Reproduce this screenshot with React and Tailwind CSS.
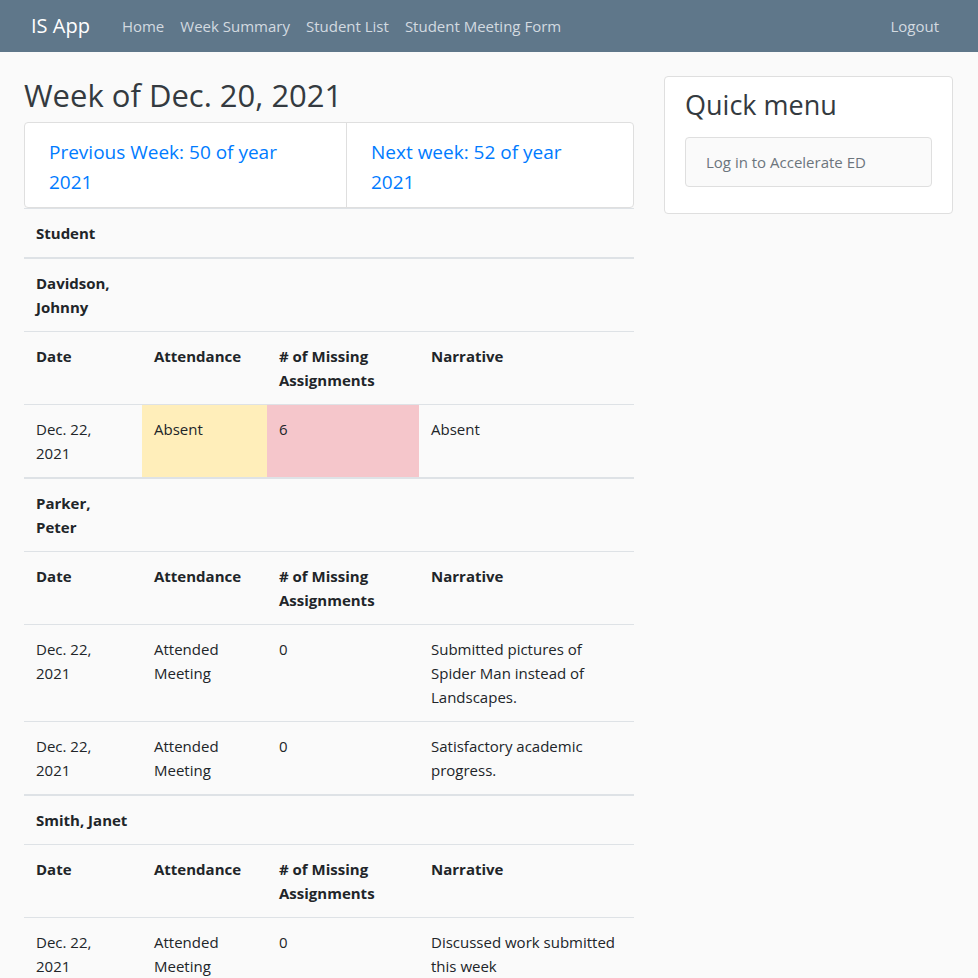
import React from "react";

const FONT = { fontFamily: '"Open Sans", "Noto Sans", Arial, sans-serif' };

const STUDENTS = [
  {
    name: "Davidson, Johnny",
    rows: [{ date: "Dec. 22, 2021", attendance: "Absent", missing: "6", narrative: "Absent", flagged: true }],
  },
  {
    name: "Parker, Peter",
    rows: [
      {
        date: "Dec. 22, 2021",
        attendance: "Attended Meeting",
        missing: "0",
        narrative: "Submitted pictures of Spider Man instead of Landscapes.",
      },
      {
        date: "Dec. 22, 2021",
        attendance: "Attended Meeting",
        missing: "0",
        narrative: "Satisfactory academic progress.",
      },
    ],
  },
  {
    name: "Smith, Janet",
    rows: [
      {
        date: "Dec. 22, 2021",
        attendance: "Attended Meeting",
        missing: "0",
        narrative: "Discussed work submitted this week",
      },
    ],
  },
];

const cell = "border-t border-[#dee2e6] p-3 align-top text-left leading-6";

function StudentBlock({ student }) {
  return (
    <tbody>
      <tr>
        <td className={`${cell} border-t-2 font-bold`}>{student.name}</td>
        <td className={`${cell} border-t-2`} />
        <td className={`${cell} border-t-2`} />
        <td className={`${cell} border-t-2`} />
      </tr>
      <tr className="font-bold">
        <td className={cell}>Date</td>
        <td className={cell}>Attendance</td>
        <td className={cell}># of Missing Assignments</td>
        <td className={cell}>Narrative</td>
      </tr>
      {student.rows.map((row, i) => (
        <tr key={i}>
          <td className={`${cell} pr-5`}>{row.date}</td>
          <td className={`${cell} ${row.flagged ? "bg-[#ffeeba]" : ""}`}>{row.attendance}</td>
          <td className={`${cell} ${row.flagged ? "bg-[#f5c6cb]" : ""}`}>{row.missing}</td>
          <td className={cell}>{row.narrative}</td>
        </tr>
      ))}
    </tbody>
  );
}

export default function App() {
  return (
    <div className="min-h-screen bg-[#fafafa] text-[15px] text-[#212529]" style={FONT}>
      <nav className="flex h-[52px] items-center bg-[#5f778a] pl-[31px] pr-[39px]">
        <span className="mr-8 text-[20px] text-white">IS App</span>
        <div className="flex gap-4 text-[#d3dae0]">
          <span>Home</span>
          <span>Week Summary</span>
          <span>Student List</span>
          <span>Student Meeting Form</span>
        </div>
        <span className="ml-auto text-[#d3dae0]">Logout</span>
      </nav>

      <div className="flex gap-[30px] px-6 pt-6">
        <main className="w-[610px]">
          <h2 className="mb-2 text-[31px] leading-[38px] text-[#343a40]">Week of Dec. 20, 2021</h2>
          <div className="flex rounded border border-[#dfdfdf] bg-white text-[19px] leading-[30px] text-[#007bff]">
            <div className="w-[322px] border-r border-[#dfdfdf] px-6 pb-[10px] pt-[14px]">
              Previous Week: 50 of year
              <br />
              2021
            </div>
            <div className="flex-1 px-6 pb-[10px] pt-[14px]">
              Next week: 52 of year
              <br />
              2021
            </div>
          </div>
          <table className="w-full table-fixed border-collapse">
            <colgroup>
              <col className="w-[118px]" />
              <col className="w-[125px]" />
              <col className="w-[152px]" />
              <col />
            </colgroup>
            <thead>
              <tr>
                <th className={`${cell} border-b-2 font-bold`}>Student</th>
                <th className={`${cell} border-b-2`} />
                <th className={`${cell} border-b-2`} />
                <th className={`${cell} border-b-2`} />
              </tr>
            </thead>
            {STUDENTS.map((s) => (
              <StudentBlock key={s.name} student={s} />
            ))}
          </table>
        </main>

        <aside className="w-[289px] self-start rounded border border-[#dfdfdf] bg-white px-5 pb-[26px] pt-[11px]">
          <h3 className="mb-[15px] text-[27px] leading-[34px] text-[#343a40]">Quick menu</h3>
          <div className="rounded border border-[#dfdfdf] bg-[#fafafa] px-5 py-3 leading-6 text-[#6c757d]">
            Log in to Accelerate ED
          </div>
        </aside>
      </div>
    </div>
  );
}
